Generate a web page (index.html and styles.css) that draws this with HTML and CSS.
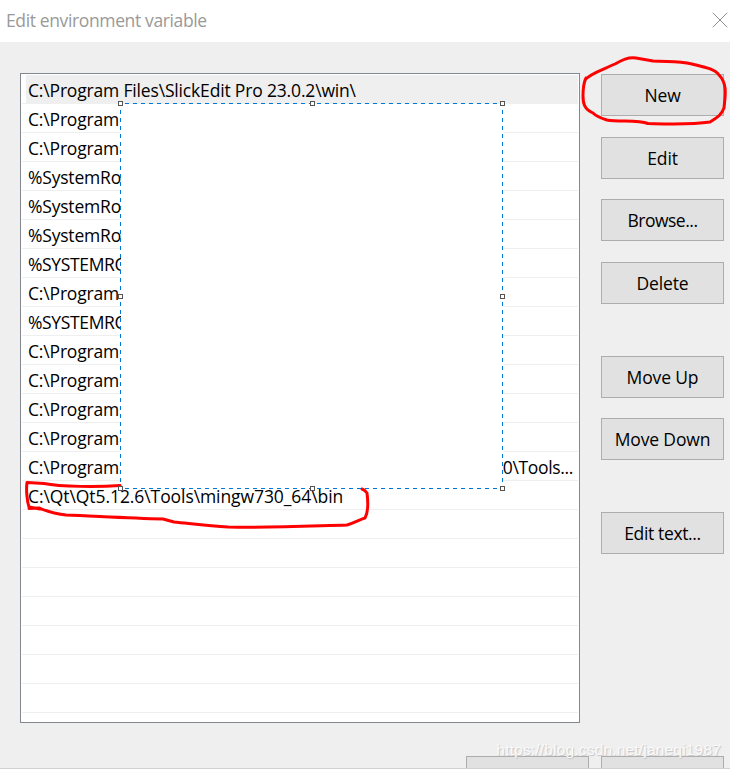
FILE: index.html
```
<!DOCTYPE html>
<html lang="en">
<head>
<meta charset="utf-8">
<title>Edit environment variable</title>
<link rel="stylesheet" href="styles.css">
</head>
<body>
<div class="dialog">
  <header class="titlebar">
    <span class="title">Edit environment variable</span>
    <svg class="close" width="16" height="16" viewBox="0 0 16 16"><path d="M.7.7 15.3 15.3M15.3.7.7 15.3"/></svg>
  </header>
  <main class="content">
    <ul class="list">
      <li class="selected"><span class="first">C:\Program Files\SlickEdit Pro 23.0.2\win\</span></li>
      <li><span>C:\Program</span></li>
      <li><span>C:\Program</span></li>
      <li><span class="sys">%SystemRo</span></li>
      <li><span class="sys">%SystemRo</span></li>
      <li><span class="sys">%SystemRo</span></li>
      <li><span class="caps">%SYSTEMRO</span></li>
      <li><span>C:\Program</span></li>
      <li><span class="caps">%SYSTEMRO</span></li>
      <li><span>C:\Program</span></li>
      <li><span>C:\Program</span></li>
      <li><span>C:\Program</span></li>
      <li><span>C:\Program</span></li>
      <li><span>C:\Program</span><span class="tail">0\Tools...</span></li>
      <li><span class="qt">C:\Qt\Qt5.12.6\Tools\mingw730_64\bin</span></li>
      <li></li><li></li><li></li><li></li><li></li><li></li><li></li>
    </ul>
    <div class="actions">
      <button>New</button>
      <button class="edit">Edit</button>
      <button class="browse">Browse...</button>
      <button class="delete">Delete</button>
      <button class="up">Move Up</button>
      <button class="down">Move Down</button>
      <button class="text">Edit text...</button>
    </div>
  </main>
  <footer class="footer"><button></button><button></button></footer>
  <svg class="overlay" width="730" height="769" viewBox="0 0 730 769">
    <rect class="mask" x="121" y="104" width="382" height="385"/>
    <path class="ink" d="M120 485.500C99 487 61 487 44 483.500L27 482.500C26 490 27 501 29 507L40 509M29 508.500 39 508C47 511 54 514 66 515 93 516 127 518 163 519L174 522C194 524 210 526 228 527 270 528 310 526 347 525 356 522 361 519 365 518 369 511 368 501 367 493Q365 490 362 489"/>
    <path class="dash" d="M125 103.500H502M125 488.500H502M120.500 110V488M502.500 110V488"/>
    <g class="handles">
      <rect x="118.500" y="101.500" width="4" height="4"/><rect x="310.500" y="101.500" width="4" height="4"/><rect x="500.500" y="101.500" width="4" height="4"/>
      <rect x="118.500" y="294.500" width="4" height="4"/><rect x="500.500" y="294.500" width="4" height="4"/>
      <rect x="118.500" y="486.500" width="4" height="4"/><rect x="310.500" y="486.500" width="4" height="4"/><rect x="500.500" y="486.500" width="4" height="4"/>
    </g>
    <path class="ink" d="M585 80C589 74 602 70 615 64 622 60 628 57 636 58L653 61C670 62 678 61 692 64 704 67 715 69 719 75 728 84 725 97 724 108 721 116 716 118 710 122 690 125 668 124 648 123.500 638 120 619 122 607 120 600 118 596 116 593 113 584 109 583 103 583 96 583 89 583 84 586 78"/>
  </svg>
  <span class="watermark">https://blog.csdn.net/janeqi1987</span>
</div>
</body>
</html>
```
FILE: styles.css
```
* { box-sizing: border-box; }
body { margin: 0; overflow: hidden; font: 17.5px "Open Sans", "Noto Sans", sans-serif; color: #000; }
.dialog { position: relative; width: 730px; height: 769px; background: #efefef; border-bottom: 1px solid #d2d2d2; display: flex; flex-direction: column; overflow: hidden; }
.titlebar { height: 42px; flex: none; background: #fff; display: flex; justify-content: space-between; align-items: center; padding: 0 2px 2px 6px; color: #999; }
.title { letter-spacing: -.37px; }
.close { fill: none; stroke: #8d8d8d; stroke-width: 1; }
.content { display: flex; gap: 21px; padding: 31px 0 0 20px; height: 714px; flex: none; }
.list { list-style: none; margin: 0; padding: 1px; width: 560px; height: 650px; border: 1px solid #828790; background: #fff; }
.list li { height: 29px; line-height: 28px; border-bottom: 1px solid #efefef; padding: 1px 0 0 6px; white-space: nowrap; display: flex; }
.list li.selected { background: linear-gradient(#efefef, #efefef) 4px 0 no-repeat; }
.list span { letter-spacing: -.17px; }
.list .sys { letter-spacing: -.2px; }
.list .caps { letter-spacing: -.35px; }
.list .qt { letter-spacing: -.08px; }
.list .tail { margin-left: auto; padding-right: 5px; letter-spacing: -.35px; }
.actions { width: 123px; padding-top: 1px; }
button { display: block; width: 123px; height: 42px; padding: 0; border: 1px solid #adadad; border-radius: 0; background: #e1e1e1; font: inherit; color: #000; letter-spacing: -.15px; }
.edit { margin-top: 21px; }
.browse { margin-top: 20px; letter-spacing: -.5px; }
.delete { margin-top: 21px; }
.up { margin-top: 52px; }
.down { margin-top: 20px; }
.text { margin-top: 52px; letter-spacing: -.35px; }
.footer { display: flex; gap: 12px; padding-left: 466px; flex: none; height: 12px; overflow: hidden; }
.overlay { position: absolute; left: 0; top: 0; }
.mask { fill: #fff; }
.ink { fill: none; stroke: #f00; stroke-width: 3; stroke-linecap: round; stroke-linejoin: round; }
.dash { fill: none; stroke: #0078d7; stroke-dasharray: 4 4; }
.handles { fill: #fff; stroke: #555; }
.watermark { position: absolute; right: 9px; top: 740px; font: 15.500px/20px "Liberation Sans", sans-serif; letter-spacing: .18px; color: #fafafa; text-shadow: 1px 1px 1px #c4c4c4; }
```
